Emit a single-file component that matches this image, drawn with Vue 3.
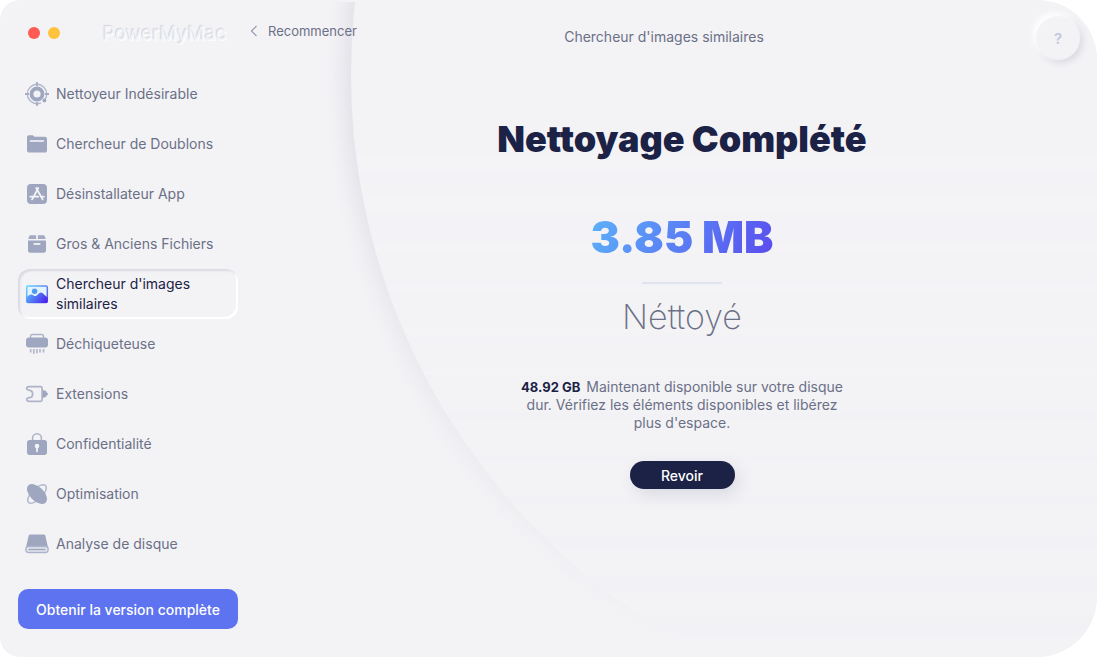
<script setup>
import { ref } from 'vue'

const items = [
  { id: 'junk', label: 'Nettoyeur Indésirable' },
  { id: 'duplicates', label: 'Chercheur de Doublons' },
  { id: 'uninstall', label: 'Désinstallateur App' },
  { id: 'large', label: 'Gros & Anciens Fichiers' },
  { id: 'images', label: "Chercheur d'images similaires" },
  { id: 'shredder', label: 'Déchiqueteuse' },
  { id: 'extensions', label: 'Extensions' },
  { id: 'privacy', label: 'Confidentialité' },
  { id: 'optimize', label: 'Optimisation' },
  { id: 'disk', label: 'Analyse de disque' },
]
const active = ref('images')
</script>

<template>
  <div class="window">
    <div class="backdrop" aria-hidden="true"><div class="disc"></div></div>

    <aside class="sidebar">
      <div class="titlebar">
        <button class="dot close" type="button" aria-label="Fermer"></button>
        <button class="dot minimize" type="button" aria-label="Réduire"></button>
        <span class="brand">PowerMyMac</span>
      </div>

      <nav class="nav">
        <button
          v-for="item in items"
          :key="item.id"
          type="button"
          class="nav-item"
          :class="{ active: active === item.id }"
          @click="active = item.id"
        >
          <svg class="icon" viewBox="0 0 24 24" fill="none" aria-hidden="true">
            <g v-if="item.id === 'junk'">
              <circle cx="12" cy="12" r="5.5" stroke="#9fa6bf" stroke-width="3.8" />
              <path d="M21.700 12a9.700 9.700 0 1 0-9.700 9.700M21.700 12a9.700 9.700 0 0 1-1.700 5.500M12 21.700a9.700 9.700 0 0 0 4-.9" stroke="#b3b9cd" stroke-width="1.400" />
              <path d="M12 0v4M12 20v4M0 12h4M20 12h4" stroke="#a5acc4" stroke-width="1.800" />
              <circle cx="19.400" cy="18.400" r="1.900" fill="#9fa6bf" />
            </g>
            <g v-else-if="item.id === 'duplicates'">
              <path d="M2 18.500V5.200c0-1.200.8-2 2-2h3.200c1 0 1.600.5 2.200 1.600h10.400c1.300 0 2.200.9 2.200 2.200v11.300c0 1.400-.9 2.300-2.300 2.300H4.300C2.900 20.600 2 19.800 2 18.500Z" fill="#9fa6bf" />
              <path d="M5.500 9h12.800" stroke="#e2e4ec" stroke-width="1.800" stroke-linecap="round" />
            </g>
            <g v-else-if="item.id === 'uninstall'">
              <rect x="2" y="2" width="20" height="20" rx="4" fill="#9fa6bf" />
              <path d="m12.700 7.200-5.600 10.200M11.200 6l6.400 11.400M5.300 14.700h7.900M16 14.700h2.800M13.200 6l-.7 1.200" stroke="#f3f4f7" stroke-width="1.800" stroke-linecap="round" />
            </g>
            <g v-else-if="item.id === 'large'">
              <path d="M5.800 3.200h5.300v3.700H3.300l.8-2.300c.3-.9.800-1.400 1.700-1.400ZM12.900 3.200h5.300c.9 0 1.400.5 1.700 1.400l.8 2.300h-7.800V3.200Z" fill="#a3aac2" />
              <path d="M3 8.600h18v9.900c0 1.300-.9 2.200-2.200 2.200H5.200c-1.300 0-2.200-.9-2.200-2.200V8.600Z" fill="#9fa6bf" />
              <path d="M9.300 12h5.400" stroke="#e9ebf1" stroke-width="1.800" stroke-linecap="round" />
            </g>
            <g v-else-if="item.id === 'images'">
              <defs>
                <linearGradient id="frame-tint" x1="2" y1="3" x2="22" y2="21" gradientUnits="userSpaceOnUse">
                  <stop stop-color="#62d7ff" /><stop offset="1" stop-color="#5a49ee" />
                </linearGradient>
                <linearGradient id="hill-tint" x1="2" y1="9" x2="20" y2="22" gradientUnits="userSpaceOnUse">
                  <stop stop-color="#57bdfb" /><stop offset="1" stop-color="#4a22ee" />
                </linearGradient>
              </defs>
              <rect x="1.700" y="4" width="20.600" height="16.500" rx="1.500" fill="#e4f4ff" stroke="url(#frame-tint)" stroke-width="1.500" />
              <circle cx="9.600" cy="9.200" r="2.700" fill="#4d9df5" />
              <path d="M1.500 15.300c2-1.900 3.800-3.300 5.300-2.800 1.700.6 2.500 1.800 3.900 1.500 1.900-.5 3.300-3.600 5.200-3.600 2.200 0 4.100 3.400 6.700 4.900v4.200c0 .9-.5 1.500-1.500 1.500H2.900c-.9 0-1.400-.6-1.400-1.500v-4.200Z" fill="url(#hill-tint)" />
            </g>
            <g v-else-if="item.id === 'shredder'">
              <path d="M5.500 7V4.300c0-1.200.6-1.800 1.800-1.800h9.400c1.200 0 1.800.6 1.800 1.800V7" stroke="#adb3c8" stroke-width="1.400" />
              <rect x="1" y="5.600" width="22" height="10" rx="3" fill="#9fa6bf" />
              <path d="M5.700 17v3.500M8.800 17v4.800M11.900 17v4.200M15 17v3.500M18.500 17v3.500" stroke="#b3b9cd" stroke-width="1.700" />
            </g>
            <g v-else-if="item.id === 'extensions'">
              <path d="M4.200 4.600h11.300c1 0 1.600.6 1.600 1.600v11.600c0 1-.6 1.600-1.600 1.600H4.200c-3.200 0-3.300-3.400-.6-3.500 5.400-.3 5.400-7.500 0-7.800-2.700-.1-2.600-3.500.6-3.500Z" stroke="#adb3c8" stroke-width="1.700" />
              <path d="M17.500 8.400c2.300-.2 3.900.4 4.400 2.300l1 .6v1.400l-1 .6c-.5 1.900-2.100 2.500-4.400 2.300V8.400Z" fill="#9fa6bf" />
            </g>
            <g v-else-if="item.id === 'privacy'">
              <path d="M7.600 9V6.200a4.400 4.400 0 0 1 8.800 0V9" stroke="#adb3c8" stroke-width="1.600" />
              <rect x="2" y="8" width="20" height="15" rx="2.700" fill="#9fa6bf" />
              <circle cx="12" cy="14" r="2.300" fill="#f3f4f7" />
              <path d="M12 15v4.300" stroke="#f3f4f7" stroke-width="1.800" stroke-linecap="round" />
            </g>
            <g v-else-if="item.id === 'optimize'">
              <ellipse cx="12" cy="12" rx="12" ry="5.300" transform="rotate(-45 12 12)" stroke="#b3b9cd" stroke-width="1.500" />
              <ellipse cx="12" cy="12" rx="12.200" ry="7" transform="rotate(45 12 12)" fill="#9fa6bf" />
            </g>
            <g v-else>
              <path d="M5.800 2.500h12.400c1.300 0 2 .6 2.300 1.800L23 15.500H1L3.500 4.300c.3-1.200 1-1.800 2.300-1.800Z" fill="#9fa6bf" />
              <path d="M3.500 14.500h17c1.500 0 2.600.9 2.600 2.200v1.400c0 1.500-1 2.400-2.600 2.400h-17C1.900 20.500.9 19.600.9 18.100v-1.400c0-1.300 1.100-2.200 2.600-2.200Z" fill="#e5e7ee" stroke="#adb3c8" stroke-width="1.400" />
              <path d="M4 17.500h16" stroke="#9fa6bf" stroke-width="1.300" stroke-linecap="round" />
            </g>
          </svg>
          <span>{{ item.label }}</span>
        </button>
      </nav>

      <button class="upgrade" type="button">Obtenir la version complète</button>
    </aside>

    <main class="main">
      <header class="topbar">
        <button class="back" type="button">
          <svg class="chevron" viewBox="0 0 8 12" fill="none" aria-hidden="true">
            <path d="M6.500 1 1.500 6l5 5" stroke="#9299ad" stroke-width="1.200" />
          </svg>
          Recommencer
        </button>
        <span class="page-title">Chercheur d'images similaires</span>
        <button class="help" type="button" aria-label="Aide">?</button>
      </header>

      <section class="result">
        <h1>Nettoyage Complété</h1>
        <p class="amount">3.85 MB</p>
        <hr class="rule" />
        <p class="status">Néttoyé</p>
        <p class="detail">
          <strong>48.92 GB</strong>
          <span>Maintenant disponible sur votre disque dur. Vérifiez les éléments disponibles et libérez plus d'espace.</span>
        </p>
        <button class="review" type="button">Revoir</button>
      </section>
    </main>
  </div>
</template>

<style>
html,
body {
  background: #fff;
}
</style>

<style scoped>
.window {
  position: relative;
  display: flex;
  box-sizing: border-box;
  min-height: 100vh;
  background: #f3f3f6;
  border-radius: 20px 60px 60px 20px;
  color: #6b7086;
  font-family: Inter, 'Liberation Sans', sans-serif;
  font-size: 14px;
  overflow: hidden;
}
button {
  margin: 0;
  padding: 0;
  border: 0;
  background: none;
  color: inherit;
  font: inherit;
  cursor: pointer;
}
.backdrop {
  position: absolute;
  inset: 2px 0 0;
  overflow: hidden;
  pointer-events: none;
  mask-image: linear-gradient(#000 20%, transparent);
}
.disc {
  position: absolute;
  top: -577px;
  left: 351px;
  width: 1300px;
  height: 1300px;
  border-radius: 50%;
  background: #f3f3f6;
  box-shadow: -8px 0 18px #e1e1e8;
}
.sidebar {
  position: relative;
  display: flex;
  flex-direction: column;
  flex: none;
  box-sizing: border-box;
  width: 248px;
  padding: 0 10px 28px 18px;
}
.titlebar {
  display: flex;
  align-items: center;
  gap: 8px;
  height: 66px;
  margin-bottom: 3px;
  padding-left: 10px;
}
.dot {
  width: 12px;
  height: 12px;
  border-radius: 50%;
}
.close {
  background: #ff5b54;
}
.minimize {
  background: #ffc23d;
}
.brand {
  margin-left: 35px;
  color: #f3f3f6;
  font-size: 19px;
  text-shadow: -1px -1px 1px #d2d2da, 1px 1px 1px #fff;
}
.nav {
  display: flex;
  flex-direction: column;
}
.nav-item {
  display: flex;
  align-items: center;
  gap: 7px;
  box-sizing: border-box;
  height: 50px;
  padding: 0 20px 0 7px;
  border-radius: 12px;
  line-height: 20px;
  text-align: left;
}
.nav-item.active {
  color: #1c2245;
  box-shadow: inset 2px 2px 2px #dadae2, inset -2px -2px 1px #fff;
}
.icon {
  flex: none;
  width: 24px;
  height: 24px;
}
.upgrade {
  height: 40px;
  margin-top: auto;
  border-radius: 10px;
  background: #5d73ef;
  color: #fff;
  font-weight: 500;
}
.main {
  position: relative;
  flex: 1;
  min-width: 0;
}
.topbar {
  display: grid;
  grid-template-columns: 1fr auto 1fr;
  align-items: center;
  height: 72px;
  padding-right: 17px;
}
.back {
  display: flex;
  align-items: center;
  gap: 10px;
  justify-self: start;
  margin-bottom: 10px;
  padding-left: 2px;
  font-size: 13px;
}
.chevron {
  width: 8px;
  height: 12px;
}
.help {
  justify-self: end;
  width: 44px;
  height: 44px;
  margin-top: 4px;
  border-radius: 50%;
  background: #f3f3f6;
  box-shadow: -3px -3px 6px #fff, 3px 3px 6px #d9d9e2;
  color: #c2c6de;
  font-size: 15px;
  font-weight: 600;
}
.result {
  display: flex;
  flex-direction: column;
  align-items: center;
  padding: 43px 0 0 19px;
  text-align: center;
}
h1,
p,
hr {
  margin: 0;
}
h1 {
  color: #1c2245;
  font-size: 36px;
  font-weight: 900;
  line-height: 48px;
}
.amount {
  margin-top: 46px;
  background: linear-gradient(120deg, #5bb4fa, #5a49ee);
  background-clip: text;
  color: transparent;
  font-size: 44px;
  font-weight: 900;
  line-height: 56px;
}
.rule {
  width: 80px;
  height: 2px;
  margin-top: 17px;
  border: 0;
  background: #e0e4ec;
}
.status {
  margin-top: 9px;
  font-size: 34px;
  font-weight: 200;
  line-height: 48px;
}
.detail {
  max-width: 330px;
  margin-top: 37px;
  line-height: 18px;
}
.detail strong {
  margin-right: 6px;
  color: #1c2245;
  font-size: 13px;
  font-weight: 700;
}
.review {
  width: 105px;
  height: 28px;
  margin-top: 29px;
  border-radius: 14px;
  background: #1c2245;
  box-shadow: 4px 6px 16px #d9d9e2;
  color: #fff;
  font-weight: 500;
}
</style>
